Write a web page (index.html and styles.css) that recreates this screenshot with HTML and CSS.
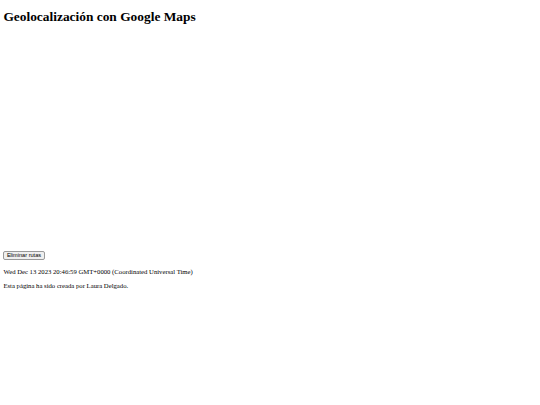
FILE: index.html
```html
<!DOCTYPE html>
<html lang="es">
<head>
    <meta charset="UTF-8" />
    <title>Geolocalización con Google Maps</title>
    <link rel="stylesheet" href="styles.css">
</head>
<body>
<h1>Geolocalización con Google Maps</h1>

<div id="map" class="map"></div>

<button class="btn" onclick="eliminarRutas()">Eliminar rutas</button>

<p id="fecha" class="info">Wed Dec 13 2023 20:46:59 GMT+0000 (Coordinated Universal Time)</p>
<p class="info">Esta página ha sido creada por Laura Delgado.</p>

<script>
    function eliminarRutas() {
      document.getElementById("map").innerHTML = "";
    }
</script>
</body>
</html>
```

FILE: styles.css
```css
body {
  margin: 3.4px;
  font-family: "Liberation Serif", "Times New Roman", serif;
  color: #000;
  background: #fff;
}
h1 {
  font-size: 13.4px;
  margin: 6px 0 9px;
}
.map {
  height: 209px;
}
.btn {
  font-family: "Liberation Sans", Arial, sans-serif;
  font-size: 5.6px;
  padding: 0.5px 2.5px;
  background: #efefef;
  border: 1px solid #999;
  border-radius: 2px;
  color: #000;
}
.info {
  font-size: 6.7px;
  margin: 6.7px 0;
}
```
